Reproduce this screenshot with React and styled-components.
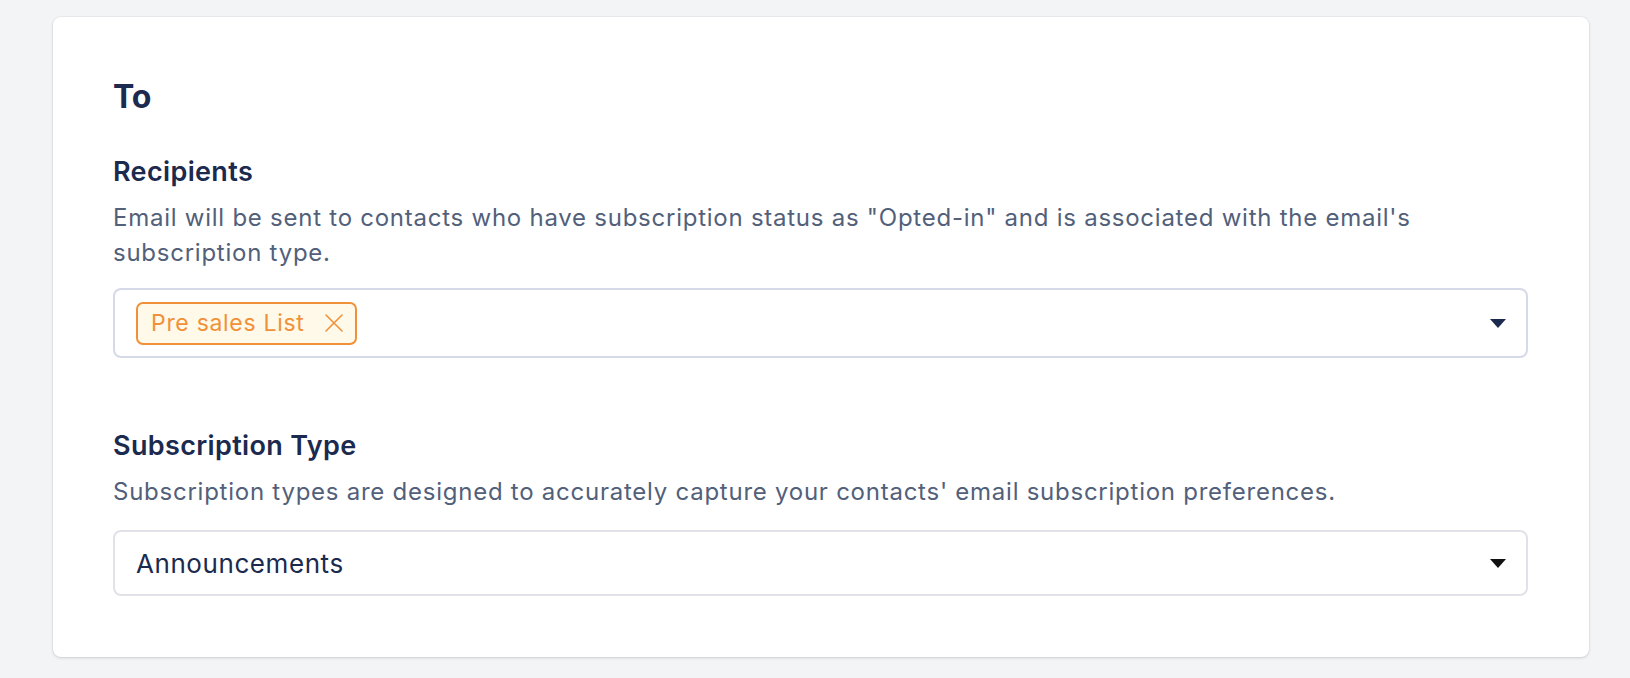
import React from "react";
import styled, { createGlobalStyle } from "styled-components";

const GlobalStyle = createGlobalStyle`
    html, body {
        margin: 0;
        padding: 0;
        background-color: #f3f4f6;
        font-family: Inter, "Noto Sans", sans-serif;
    }
`;

const Page = styled.div`
    padding: 17px 41px 19px 53px;
`;

const Card = styled.section`
    background-color: #ffffff;
    border-radius: 8px;
    box-shadow: 0 1px 3px rgba(30, 40, 70, 0.16), 0 0 0 1px rgba(30, 40, 70, 0.03);
    padding: 60px 61px 61px 60px;
`;

const Title = styled.h2`
    margin: 0;
    font-size: 32px;
    line-height: 40px;
    font-weight: 700;
    color: #1b2a4e;
`;

const Field = styled.div`
    margin-top: ${(p) => p.$top}px;
`;

const Label = styled.h3`
    margin: 0;
    font-size: 27px;
    line-height: 36px;
    font-weight: 600;
    letter-spacing: 0.35px;
    color: #1b2a4e;
`;

const Help = styled.p`
    margin: 10px 0 0;
    font-size: 24px;
    line-height: 35px;
    letter-spacing: 0.75px;
    color: #52607a;
`;

const Select = styled.div`
    display: flex;
    align-items: center;
    justify-content: space-between;
    box-sizing: border-box;
    height: ${(p) => p.$height}px;
    margin-top: ${(p) => p.$gap}px;
    padding: 0 20px 0 21px;
    border: 2px solid ${(p) => p.$border};
    border-radius: 8px;
    background-color: #ffffff;
`;

const Value = styled.span`
    font-size: 26px;
    letter-spacing: 0.57px;
    color: #1b2a4e;
`;

const Tag = styled.span`
    display: inline-flex;
    align-items: center;
    gap: 20px;
    box-sizing: border-box;
    height: 43px;
    padding: 0 12px 0 13px;
    border: 2px solid #f0913a;
    border-radius: 7px;
    background-color: #fef9e8;
    color: #f0913a;
    font-size: 23px;
    letter-spacing: 0.7px;
`;

const Caret = styled.span`
    width: 0;
    height: 0;
    border-left: 8px solid transparent;
    border-right: 8px solid transparent;
    border-top: 9px solid ${(p) => p.$color};
`;

const CloseIcon = () => (
    <svg width="18" height="18" viewBox="0 0 18 18" fill="none">
        <path d="M1 1L17 17M17 1L1 17" stroke="#f0913a" strokeWidth="1.6" strokeLinecap="round" />
    </svg>
);

const App = () => {
    return (
        <>
            <GlobalStyle />
            <Page>
                <Card>
                    <Title>To</Title>
                    <Field $top={37}>
                        <Label>Recipients</Label>
                        <Help>
                            Email will be sent to contacts who have subscription status as "Opted-in" and is
                            associated with the email's subscription type.
                        </Help>
                        <Select $height={70} $gap={18} $border="#d6d9e8">
                            <Tag>
                                Pre sales List
                                <CloseIcon />
                            </Tag>
                            <Caret $color="#1b2a4e" />
                        </Select>
                    </Field>
                    <Field $top={70}>
                        <Label>Subscription Type</Label>
                        <Help>
                            Subscription types are designed to accurately capture your contacts' email
                            subscription preferences.
                        </Help>
                        <Select $height={66} $gap={21} $border="#e0e2e7">
                            <Value>Announcements</Value>
                            <Caret $color="#111111" />
                        </Select>
                    </Field>
                </Card>
            </Page>
        </>
    );
};

export default App;
